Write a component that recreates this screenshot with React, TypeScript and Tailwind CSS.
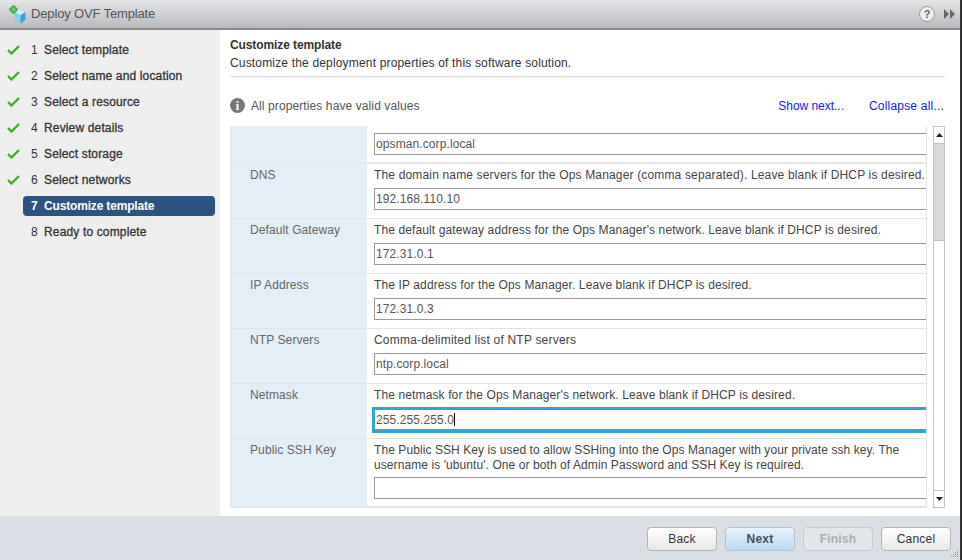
const steps = [
  { n: 1, label: "Select template", done: true },
  { n: 2, label: "Select name and location", done: true },
  { n: 3, label: "Select a resource", done: true },
  { n: 4, label: "Review details", done: true },
  { n: 5, label: "Select storage", done: true },
  { n: 6, label: "Select networks", done: true },
  { n: 7, label: "Customize template", active: true },
  { n: 8, label: "Ready to complete" },
];

const rows = [
  {
    name: "DNS",
    desc: "The domain name servers for the Ops Manager (comma separated). Leave blank if DHCP is desired.",
    tracking: "tracking-[0.16px]",
    value: "192.168.110.10",
  },
  {
    name: "Default Gateway",
    desc: "The default gateway address for the Ops Manager's network. Leave blank if DHCP is desired.",
    tracking: "tracking-[0.11px]",
    value: "172.31.0.1",
  },
  {
    name: "IP Address",
    desc: "The IP address for the Ops Manager. Leave blank if DHCP is desired.",
    tracking: "tracking-[0.12px]",
    value: "172.31.0.3",
  },
  {
    name: "NTP Servers",
    desc: "Comma-delimited list of NTP servers",
    tracking: "tracking-[0.2px]",
    value: "ntp.corp.local",
  },
  {
    name: "Netmask",
    desc: "The netmask for the Ops Manager's network. Leave blank if DHCP is desired.",
    tracking: "tracking-[0.12px]",
    value: "255.255.255.0",
    focused: true,
  },
];

function CubeIcon() {
  return (
    <svg width="20" height="20" viewBox="0 0 20 20" className="shrink-0">
      <path d="M11.5 5.5l6 2.5v7.5l-5.5 4-5-2.5-1-7.5z" fill="#8dd0f0" />
      <path d="M12.5 11l5-3v7.5l-5 4z" fill="#3f9fd6" />
      <path d="M6.5 7.5l6 3.5 5-3-6-2.5z" fill="#cdebf9" />
      <path d="M4 2h3v2h2v3H7v2H4V7H2V4h2z" fill="#5ccf55" stroke="#1f7d2a" strokeWidth="0.7" />
    </svg>
  );
}

function CheckMark() {
  return (
    <svg width="13" height="10" viewBox="0 0 13 10">
      <path d="M1 5l3.5 3.5L12 1" fill="none" stroke="#3fae2a" strokeWidth="2.4" />
    </svg>
  );
}

function ResizeGrip() {
  return (
    <svg width="11" height="11" viewBox="0 0 11 11" className="absolute bottom-[1px] right-0">
      <path
        d="M8 2h1v1H8zM6 4h1v1H6zM8 4h1v1H8zM4 6h1v1H4zM6 6h1v1H6zM8 6h1v1H8zM2 8h1v1H2zM4 8h1v1H4zM6 8h1v1H6zM8 8h1v1H8z"
        fill="#8b9097"
      />
    </svg>
  );
}

function Footer({ label, kind }: { label: string; kind?: "primary" | "disabled" }) {
  const tone =
    kind === "primary"
      ? "font-bold text-[#44505c] border-[#b5c3d0] bg-linear-to-b from-[#e6f3fc] to-[#bcd9f5]"
      : kind === "disabled"
        ? "font-bold text-[#a8aeb3] border-[#c6cbd0] bg-[#e3e6ea]"
        : "text-[#333] border-[#b4b4b4] bg-linear-to-b from-white to-[#e8e8e8]";
  return (
    <button className={`h-[24px] w-[70px] rounded-[4px] border text-[12px] tracking-[0.2px] ${tone}`}>{label}</button>
  );
}

function Field({ value, focused }: { value: string; focused?: boolean }) {
  if (focused) {
    return (
      <div className="-ml-[2px] -mt-[1px] h-[26px] border-[3px] border-r-0 border-[#34a4d8] tracking-[0.1px] text-[#555]">
        <div className="flex h-full w-full items-center border-b border-[#888] pl-[1px]">
          <span>{value}</span>
          <span className="h-[13px] w-px bg-black" />
        </div>
      </div>
    );
  }
  return (
    <div className="flex h-[22px] items-center border border-r-0 border-[#999] pl-[1px] tracking-[0.1px] text-[#555]">
      {value}
    </div>
  );
}

export default function App() {
  return (
    <div className="h-[560px] w-[963px] overflow-hidden bg-white font-['Liberation_Sans',Arial,sans-serif] text-[12px]">
      <div className="relative flex h-full w-[962px] flex-col border-r-2 border-[#333]">
        {/* Title bar */}
        <div className="flex h-[30px] shrink-0 items-center border-b-2 border-[#8a8a8a] bg-linear-to-b from-[#e4e5e7] to-[#b8babd] pl-[8px] pr-[5px]">
          <CubeIcon />
          <span className="ml-[3px] text-[13px] tracking-[-0.15px] text-[#555]">Deploy OVF Template</span>
          <div className="ml-auto flex items-center gap-[9px]">
            <div className="flex h-[16px] w-[16px] items-center justify-center rounded-full border border-[#999] bg-[#eee] text-[11px] font-bold text-[#666]">
              ?
            </div>
            <svg width="11" height="10" viewBox="0 0 11 10">
              <path d="M0 0l5 5-5 5zM6 0l5 5-5 5z" fill="#666" />
            </svg>
          </div>
        </div>

        <div className="flex min-h-0 flex-1">
          {/* Steps */}
          <div className="flex w-[220px] shrink-0 flex-col gap-[4px] bg-[#eeeeee] pl-[7px] pt-[9px]">
            {steps.map((s) => (
              <div key={s.n} className="flex h-[22px] items-center">
                <div className="flex w-[16px] shrink-0">{s.done && <CheckMark />}</div>
                <div
                  className={
                    s.active
                      ? "flex h-[20px] w-[192px] items-center rounded-[4px] bg-[#2b5580] pl-[8px] font-bold tracking-[-0.17px] text-white"
                      : "flex h-[20px] w-[192px] items-center pl-[8px] tracking-[0.15px] text-[#333]"
                  }
                >
                  <span className="w-[13px] shrink-0">{s.n}</span>
                  <span className={s.active ? "" : "[-webkit-text-stroke:0.3px_#333]"}>{s.label}</span>
                </div>
              </div>
            ))}
          </div>

          {/* Content */}
          <div className="flex min-w-0 flex-1 flex-col pl-[10px]">
            <div className="mr-[15px] h-[47px] border-b border-[#d9d9d9] pt-[8px] text-[#333]">
              <div className="font-bold leading-[15px] tracking-[-0.1px]">Customize template</div>
              <div className="mt-[3px] leading-[15px] tracking-[0.17px]">
                Customize the deployment properties of this software solution.
              </div>
            </div>
            <div className="mr-[16px] mt-[20px] flex h-[17px] items-center text-[#555]">
              <div className="flex h-[15px] w-[15px] items-center justify-center rounded-full bg-[#777] font-['Liberation_Serif',serif] text-[12px] font-bold text-white">
                i
              </div>
              <span className="ml-[6px] tracking-[0.1px]">All properties have valid values</span>
              <a className="ml-auto tracking-[-0.03px] text-[#1a1af0]">Show next...</a>
              <a className="ml-[25px] tracking-[0.2px] text-[#1a1af0]">Collapse all...</a>
            </div>

            {/* Properties */}
            <div className="mt-[12px] flex h-[382px]">
              <div className="h-full w-[697px] border-b-2 border-l border-r border-[#e4e4e4]">
                <div className="flex h-[38px] border-b-2 border-[#e8e8e8]">
                  <div className="w-[136px] shrink-0 bg-[#e3eef6]" />
                  <div className="min-w-0 flex-1 pl-[7px] pt-[7px]">
                    <Field value="opsman.corp.local" />
                  </div>
                </div>
                {rows.map((r) => (
                  <div key={r.name} className="flex h-[55px] border-b border-[#e4e4e4]">
                    <div className="w-[136px] shrink-0 bg-[#e3eef6] pl-[19px] pt-[2px] tracking-[0.1px] text-[#666]">
                      {r.name}
                    </div>
                    <div className="min-w-0 flex-1 pl-[7px] pt-[4px]">
                      <div className={`mb-[5px] whitespace-nowrap leading-[15px] text-[#444] ${r.tracking}`}>
                        {r.desc}
                      </div>
                      <Field value={r.value} focused={r.focused} />
                    </div>
                  </div>
                ))}
                <div className="flex h-[67px]">
                  <div className="w-[136px] shrink-0 bg-[#e3eef6] pl-[19px] pt-[2px] tracking-[0.1px] text-[#666]">
                    Public SSH Key
                  </div>
                  <div className="min-w-0 flex-1 pl-[7px] pt-[4px]">
                    <div className="mb-[4px] whitespace-nowrap leading-[15px] tracking-[0.08px] text-[#444]">
                      The Public SSH Key is used to allow SSHing into the Ops Manager with your private ssh key. The
                      <br />
                      username is 'ubuntu'. One or both of Admin Password and SSH Key is required.
                    </div>
                    <Field value="" />
                  </div>
                </div>
              </div>
              {/* Scrollbar */}
              <div className="ml-[6px] flex h-full w-[12px] flex-col border border-[#c4c4c4] bg-white">
                <div className="flex h-[17px] items-center justify-center border-b border-[#c4c4c4] bg-white">
                  <svg width="7" height="4" viewBox="0 0 7 4"><path d="M3.5 0L7 4H0z" fill="#222" /></svg>
                </div>
                <div className="h-[97px] border-b border-[#c4c4c4] bg-[#d9d9d9]" />
                <div className="flex-1" />
                <div className="flex h-[17px] items-center justify-center border-t border-[#c4c4c4] bg-white">
                  <svg width="7" height="4" viewBox="0 0 7 4"><path d="M0 0h7L3.5 4z" fill="#222" /></svg>
                </div>
              </div>
            </div>
          </div>
        </div>

        {/* Footer */}
        <div className="flex h-[44px] shrink-0 items-center justify-end gap-[8px] bg-[#dadfe6] pr-[9px] pt-[2px]">
          <Footer label="Back" />
          <Footer label="Next" kind="primary" />
          <Footer label="Finish" kind="disabled" />
          <Footer label="Cancel" />
        </div>
        <ResizeGrip />
      </div>
    </div>
  );
}
